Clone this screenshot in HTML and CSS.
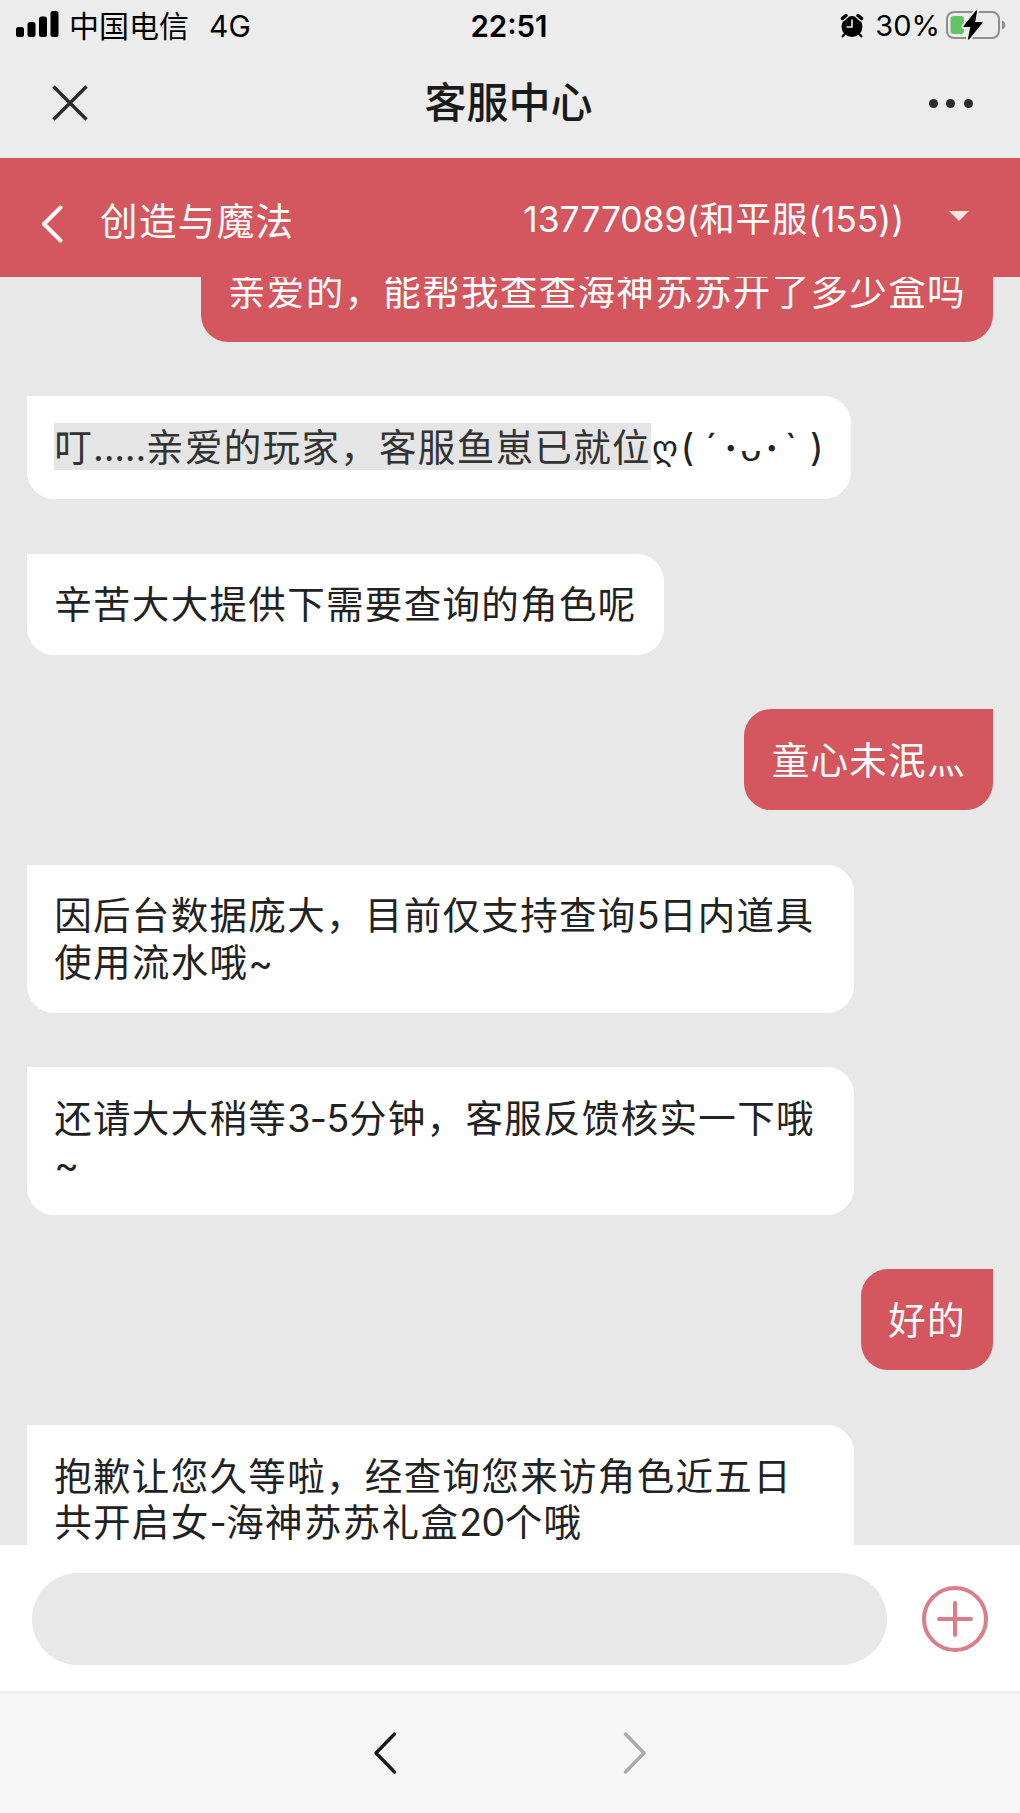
FILE: index.html
```html
<!DOCTYPE html>
<html lang="zh-CN">
<head>
    <meta charset="UTF-8">
    <meta name="viewport" content="width=device-width, initial-scale=1.0">
    <title>客服中心</title>
    <link rel="stylesheet" href="styles.css">
</head>
<body>
    <div class="status-bar">
        <div class="status-left">
            <svg class="signal" width="43" height="27" viewBox="0 0 43 27">
                <rect x="0" y="16" width="8" height="10" rx="2.5"/>
                <rect x="11.5" y="11" width="8" height="15" rx="2.5"/>
                <rect x="23" y="5.500" width="8" height="20.500" rx="2.5"/>
                <rect x="34.500" y="0" width="8" height="26" rx="2.5"/>
            </svg>
            <span class="carrier">中国电信</span>
            <span class="network">4G</span>
        </div>
        <div class="time">22:51</div>
        <div class="status-right">
            <svg class="alarm" width="24" height="25" viewBox="0 0 24 25">
                <circle cx="12" cy="13.500" r="10.500"/>
                <path d="M2.500 5.500 L6 2.800" stroke="#000" stroke-width="3.600" stroke-linecap="round"/>
                <path d="M21.500 5.500 L18 2.800" stroke="#000" stroke-width="3.600" stroke-linecap="round"/>
                <path d="M2.500 8.500 L8.500 3.500 M21.500 8.500 L15.500 3.500" stroke="#ececec" stroke-width="1.200"/>
                <path d="M5 20.500 L2.500 23.500 M19 20.500 L21.500 23.500" stroke="#000" stroke-width="2" stroke-linecap="round"/>
                <path d="M12 6.500 V14 H6.500" fill="none" stroke="#ececec" stroke-width="1.600"/>
            </svg>
            <span class="percent">30%</span>
            <svg class="battery" width="60" height="32" viewBox="0 0 60 32">
                <rect x="1" y="3" width="52" height="26" rx="7" fill="none" stroke="#8f8f8f" stroke-width="2"/>
                <path d="M56 11.500 C60.500 13 60.500 19 56 20.500 Z" fill="#8f8f8f"/>
                <rect x="4.500" y="7" width="13.500" height="18" rx="3" fill="#62c466"/>
                <path d="M30.500 2 L18 17.500 H25 L22.500 30 L36 13.500 H28.500 Z" fill="#000" stroke="#ececec" stroke-width="5" stroke-linejoin="round"/>
                <path d="M30.500 2 L18 17.500 H25 L22.500 30 L36 13.500 H28.500 Z" fill="#000" stroke="#000" stroke-width="1.200" stroke-linejoin="round"/>
            </svg>
        </div>
    </div>

    <div class="title-bar">
        <svg class="close" width="36" height="36" viewBox="0 0 36 36">
            <path d="M1.500 1.500 L34.500 34.500 M34.500 1.500 L1.500 34.500"/>
        </svg>
        <h1>客服中心</h1>
        <div class="more"><i></i><i></i><i></i></div>
    </div>

    <div class="game-bar">
        <svg class="back" width="22" height="38" viewBox="0 0 22 38">
            <path d="M19.500 2.500 L3 19 L19.500 35.500"/>
        </svg>
        <span class="game-name">创造与魔法</span>
        <span class="role"><b>13777089(</b>和平服<b>(155))</b></span>
        <span class="caret"></span>
    </div>

    <div class="chat">
        <div class="msg me first">亲爱的，能帮我查查海神苏苏开了多少盒吗</div>
        <div class="msg tall"><span class="mark">叮<span class="dots">.....</span>亲爱的玩家，客服鱼崽已就位</span><span class="face"><span class="hand">ღ</span><span>(</span><span>´</span><span class="eye">·</span><span>ᴗ</span><span class="eye">·</span><span>`</span><span>)</span></span></div>
        <div class="msg">辛苦大大提供下需要查询的角色呢</div>
        <div class="msg me">童心未泯灬</div>
        <div class="msg wide">因后台数据庞大，目前仅支持查询<span class="num">5</span>日内道具<br>使用流水哦~</div>
        <div class="msg wide">还请大大稍等<span class="num">3-5</span>分钟，客服反馈核实一下哦<br>~</div>
        <div class="msg me">好的</div>
        <div class="msg wide">抱歉让您久等啦，经查询您来访角色近五日<br>共开启女<span class="num">-</span>海神苏苏礼盒<span class="num">20</span>个哦</div>
    </div>

    <div class="input-bar">
        <input type="text" class="input">
        <svg class="plus" width="66" height="66" viewBox="0 0 66 66">
            <circle cx="33" cy="33" r="31"/>
            <path d="M33 17 V49 M17 33 H49"/>
        </svg>
    </div>

    <div class="bottom-nav">
        <svg width="24" height="44" viewBox="0 0 24 44">
            <path d="M21.500 3 L3 22 L21.500 41" stroke="#1a1a1a"/>
        </svg>
        <svg width="24" height="44" viewBox="0 0 24 44">
            <path d="M2.500 3 L21 22 L2.500 41" stroke="#aaa"/>
        </svg>
    </div>
</body>
</html>
```
FILE: styles.css
```css
* {
    margin: 0;
    padding: 0;
    box-sizing: border-box;
}
body {
    width: 1020px;
    height: 1813px;
    overflow: hidden;
    display: flex;
    flex-direction: column;
    background: #e8e8e8;
    font-family: Inter, "Noto Sans CJK SC", sans-serif;
    color: #222;
}
svg {
    display: block;
    flex: none;
}

/* status bar */
.status-bar {
    height: 52px;
    flex: none;
    display: grid;
    grid-template-columns: 1fr auto 1fr;
    align-items: center;
    padding: 0 14px 0 16px;
    background: #ececec;
    color: #000;
    font-size: 30px;
    line-height: 52px;
    white-space: nowrap;
}
.status-left,
.status-right {
    display: flex;
    align-items: center;
}
.status-right {
    justify-content: flex-end;
}
.signal {
    margin-top: -3px;
}
.carrier {
    margin-left: 10px;
}
.network {
    margin-left: 20px;
}
.time {
    margin-right: 4px;
    font-weight: 600;
    font-size: 29.5px;
}
.percent {
    margin: 0 6px 0 11px;
    font-size: 29px;
}
.alarm,
.battery {
    margin-top: -2px;
}

/* title */
.title-bar {
    height: 106px;
    flex: none;
    display: flex;
    align-items: center;
    justify-content: space-between;
    padding: 0 47px 4px 52px;
    background: #ececec;
}
.title-bar h1 {
    font-size: 42px;
    line-height: 60px;
    font-weight: 500;
    color: #1a1a1a;
}
.close path {
    stroke: #2b2b2b;
    stroke-width: 3.4;
}
.more {
    display: flex;
    gap: 8.5px;
}
.more i {
    width: 9px;
    height: 9px;
    border-radius: 50%;
    background: #2b2b2b;
}

/* game header */
.game-bar {
    height: 119px;
    flex: none;
    display: flex;
    align-items: center;
    padding: 5px 51px 0 41px;
    background: #d4565e;
    color: #fff;
    white-space: nowrap;
}
.back {
    margin-top: 7px;
}
.back path {
    fill: none;
    stroke: #fff;
    stroke-width: 4;
    stroke-linecap: round;
    stroke-linejoin: round;
}
.game-name {
    margin: -3px 0 0 37px;
    font-size: 37.5px;
    letter-spacing: 1.4px;
}
.role {
    margin: -8px 0 0 auto;
    font-size: 35.5px;
    letter-spacing: 0.8px;
}
.role b {
    font-weight: 400;
    letter-spacing: -0.1px;
}
.caret {
    margin: -9px 0 0 45px;
    border: 10px solid transparent;
    border-top: 10px solid #fbe3e4;
    border-bottom: 0;
}

/* messages */
.chat {
    height: 1268px;
    flex: none;
    overflow: hidden;
    display: flex;
    flex-direction: column;
    align-items: flex-start;
    gap: 54.5px;
    padding: 0 27px;
}
.msg {
    flex: none;
    padding: 28.7px 27.2px 25.7px;
    border-radius: 0 27px 27px 27px;
    background: #fff;
    font-size: 37.5px;
    line-height: 46.7px;
    letter-spacing: 1.33px;
    white-space: nowrap;
}
.msg.me {
    align-self: flex-end;
    border-radius: 27px 0 27px 27px;
    background: #d4565e;
    color: #fff;
}
.msg.first {
    margin-top: -36.5px;
}
.msg.wide {
    width: 827px;
}
.msg.tall {
    width: 824px;
    height: 103px;
    display: flex;
    padding-top: 27.2px;
    line-height: 49.7px;
}
.mark {
    height: 46.7px;
    background: #e5e5e5;
    color: #333;
}
.dots {
    letter-spacing: -0.2px;
}
.num {
    letter-spacing: -0.5px;
}
.face {
    display: grid;
    grid-template-columns: 28px 17px 31px 8px 32px 10px 28px 24px;
    justify-items: center;
    letter-spacing: 0;
}
.hand {
    font-family: "DejaVu Sans", sans-serif;
    font-size: 33px;
}
.eye {
    font-weight: 700;
}

/* input */
.input-bar {
    height: 149px;
    flex: none;
    display: flex;
    align-items: center;
    padding: 2px 32px 0;
    background: #fff;
    border-bottom: 3px solid #f0f0f0;
}
.input {
    width: 855px;
    height: 92px;
    border: none;
    border-radius: 46px;
    background: #e8e8e8;
}
.plus {
    margin-left: 35px;
    fill: none;
    stroke: #da7f89;
    stroke-width: 4;
    stroke-linecap: round;
}

/* browser nav */
.bottom-nav {
    flex: 1;
    display: flex;
    justify-content: center;
    gap: 226px;
    padding-top: 37px;
    background: #f6f6f6;
}
.bottom-nav path {
    fill: none;
    stroke-width: 3.4;
    stroke-linecap: round;
    stroke-linejoin: round;
}
```
